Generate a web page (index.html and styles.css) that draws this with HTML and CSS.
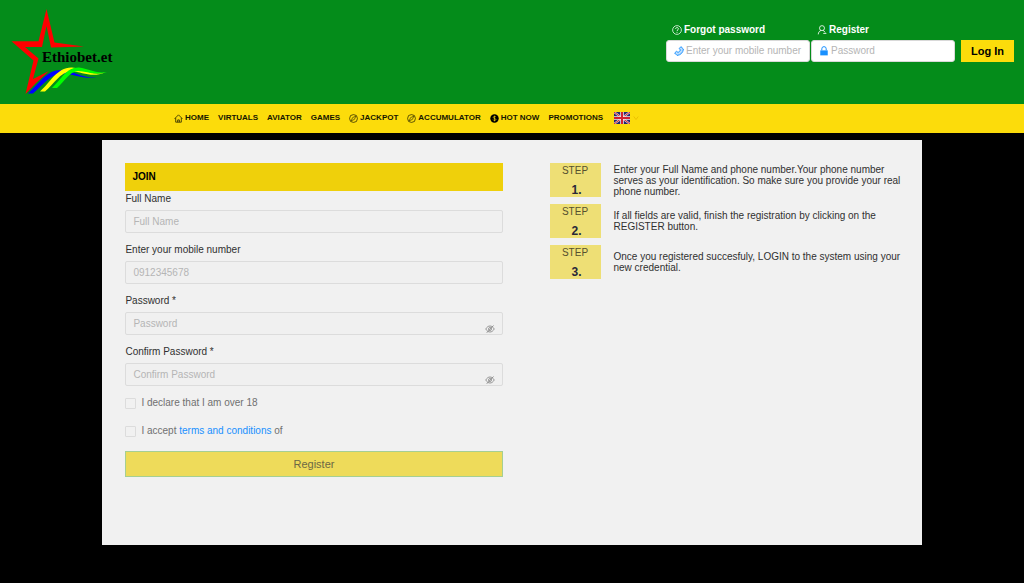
FILE: index.html
```html
<!DOCTYPE html>
<html lang="en">
<head>
<meta charset="utf-8">
<meta name="viewport" content="width=device-width, initial-scale=1">
<title>Ethiobet.et</title>
<link rel="stylesheet" href="styles.css">
</head>
<body>
<svg class="defs" aria-hidden="true">
  <symbol id="compass" viewBox="0 0 16 16"><circle cx="8" cy="8" r="7" fill="none" stroke="currentColor" stroke-width="1.2"/><path d="M12.200 3.800 9.600 9.600 3.800 12.200 6.400 6.400Z" fill="none" stroke="currentColor" stroke-width="1"/></symbol>
  <symbol id="eye-off" viewBox="0 0 20 20"><path d="M1.5 10C4 5.8 6.8 4 10 4s6 1.800 8.500 6C16 14.200 13.200 16 10 16s-6-1.800-8.500-6Z" fill="none" stroke="currentColor" stroke-width="1.700"/><circle cx="10" cy="10" r="3" fill="none" stroke="currentColor" stroke-width="1.600"/><path d="M3.500 17.500 17 3" stroke="currentColor" stroke-width="1.800"/></symbol>
</svg>
<header class="header">
  <a class="logo" href="#" aria-label="Ethiobet.et">
    <svg viewBox="0 0 130 104" width="130" height="104">
      <path fill="#f00" d="M46.500 9 54.500 42.500 84 46.500 51 47.500 46.500 26 42 47H25L38.500 58.500 33 79 49 71 36 83 25.500 94 33.500 60.500 11.500 41.200H38.500Z"/>
      <path fill="#00f" d="M28 93.500C40 82 48 69 62 70c11 1 19 8 35 7.500-16 2-26-5-36-4C51 74 43 85 33 93.500Z"/>
      <path fill="#ff0" d="M40 91.500C50 83 57 67 72 67.500c12 1 18 8.500 33 5-14 6-24-1.500-34-1C60 72 54 84 45 91.500Z"/>
      <path fill="#0f0" d="M52 88C62 79 66 67 79 67.500c10 1 16 6.500 28 4.500-13 4-20-1-29-1C69 72 65 81 57 88Z"/>
      <text class="logo-text" x="42" y="62">Ethiobet.et</text>
    </svg>
  </a>
  <form class="login">
    <div class="login-col">
      <a class="login-link" href="#"><svg class="icon" viewBox="0 0 16 16"><circle cx="8" cy="8" r="7" fill="none" stroke="currentColor" stroke-width="1.200"/><path d="M5.800 6.300C5.800 3.200 10.300 3.300 10.200 6.200 10.200 7.900 8 7.800 8 9.700M8 11v1.500" fill="none" stroke="currentColor" stroke-width="1.300"/></svg>Forgot password</a>
      <label class="login-field"><svg class="icon" viewBox="0 0 16 16"><path d="m11 1 4 3.800C14.700 10.500 10.500 14.700 4.800 15L1 11.200 4 8.500 6.500 10.300C8.200 9.500 9.500 8.200 10.300 6.500L8.500 4Z" fill="#1890ff" fill-opacity=".3" stroke="#1890ff" stroke-width="1.500"/></svg><input type="tel" aria-label="Mobile number" placeholder="Enter your mobile number"></label>
    </div>
    <div class="login-col">
      <a class="login-link" href="#"><svg class="icon" viewBox="0 0 16 16"><circle cx="8" cy="5" r="4" fill="none" stroke="currentColor" stroke-width="1.300"/><path d="M2 15c.2-3.500 2-5.500 4.500-6.300M9.500 8.700c1.700.5 2.800 1.600 3.500 3.300M10 13.500h5" fill="none" stroke="currentColor" stroke-width="1.300"/></svg>Register</a>
      <label class="login-field"><svg class="icon" viewBox="0 0 16 16"><path d="M4.500 7V4.500a3.500 3.500 0 0 1 7 0V7" fill="none" stroke="#1890ff" stroke-width="1.600"/><path d="M2 7h12v8H2Z" fill="#1890ff"/></svg><input type="password" aria-label="Login password" placeholder="Password"></label>
    </div>
    <button class="login-button" type="button">Log In</button>
  </form>
</header>
<nav class="nav">
  <a href="#"><svg class="nav-icon" viewBox="0 0 16 16"><path d="M1 8.500 8 1.500 15 8.500M3 7v7.500h10V7M6.500 14.500v-4h3v4" fill="none" stroke="currentColor" stroke-width="1.300"/></svg>HOME</a>
  <a href="#">VIRTUALS</a>
  <a href="#">AVIATOR</a>
  <a href="#">GAMES</a>
  <a href="#"><svg class="nav-icon"><use href="#compass"/></svg>JACKPOT</a>
  <a href="#"><svg class="nav-icon"><use href="#compass"/></svg>ACCUMULATOR</a>
  <a href="#"><svg class="nav-icon" viewBox="0 0 16 16"><circle cx="8" cy="8" r="7.500"/><path d="M10.500 5.500C10 3.800 5.700 3.900 5.700 6.100c0 2.400 4.800 1.300 4.800 3.700 0 2.300-4.500 2.300-5 .2M8 3v10" fill="none" stroke="#fcdc0b" stroke-width="1.200"/></svg>HOT NOW</a>
  <a href="#">PROMOTIONS</a>
  <button class="language" type="button" aria-label="Language: English">
    <svg viewBox="0 0 32 24" width="16" height="12"><path fill="#23276f" d="M0 0h32v24H0z"/><path d="m0 0 32 24M32 0 0 24" stroke="#ddd" stroke-width="4"/><path d="m0 0 32 24M32 0 0 24" stroke="#d2202f" stroke-width="2"/><path d="M16 0v24M0 12h32" stroke="#eee" stroke-width="7"/><path d="M16 0v24M0 12h32" stroke="#d2202f" stroke-width="4"/></svg>
    <svg viewBox="0 0 8 8" width="6" height="6"><path d="m1 2 3 4 3-4" fill="none" stroke="#e8b800"/></svg>
  </button>
</nav>
<main class="panel">
  <form class="join">
    <h1 class="join-title">JOIN</h1>
    <div class="field"><label for="name">Full Name</label><input id="name" type="text" placeholder="Full Name"></div>
    <div class="field"><label for="mobile">Enter your mobile number</label><input id="mobile" type="tel" placeholder="0912345678"></div>
    <div class="field"><label for="password">Password *</label><div class="secret"><input id="password" type="password" placeholder="Password"><button class="reveal" type="button" aria-label="Show password"><svg width="10" height="10"><use href="#eye-off"/></svg></button></div></div>
    <div class="field"><label for="confirm">Confirm Password *</label><div class="secret"><input id="confirm" type="password" placeholder="Confirm Password"><button class="reveal" type="button" aria-label="Show confirmed password"><svg width="10" height="10"><use href="#eye-off"/></svg></button></div></div>
    <div class="check"><input id="age" type="checkbox"><label for="age">I declare that I am over 18</label></div>
    <div class="check"><input id="terms" type="checkbox"><label for="terms">I accept <a href="#">terms and conditions</a> of</label></div>
    <button class="register" type="button">Register</button>
  </form>
  <ol class="steps">
    <li><div class="step">STEP<strong>1.</strong></div><p>Enter your Full Name and phone number.Your phone number serves as your identification. So make sure you provide your real phone number.</p></li>
    <li><div class="step">STEP<strong>2.</strong></div><p>If all fields are valid, finish the registration by clicking on the REGISTER button.</p></li>
    <li><div class="step">STEP<strong>3.</strong></div><p>Once you registered succesfuly, LOGIN to the system using your new credential.</p></li>
  </ol>
</main>
</body>
</html>
```

FILE: styles.css
```css
* { box-sizing: border-box; }
body {
  margin: 0;
  background: #000;
  color: #303030;
  font: 10px/16px "Liberation Sans", Arial, sans-serif;
}
input, button { font: inherit; color: inherit; margin: 0; }
input::placeholder { color: #b5b5b5; opacity: 1; }
a { text-decoration: none; }
svg { display: block; flex: none; }
.defs { position: absolute; width: 0; height: 0; }

.header {
  display: flex;
  justify-content: space-between;
  align-items: flex-start;
  background: #048c1a;
}
.logo-text { font: bold 15px "Liberation Serif", serif; fill: #000; }
.login {
  display: flex;
  align-items: flex-end;
  gap: 1px;
  padding: 22px 10px 0 0;
}
.login-col { width: 144px; }
.login-link {
  display: flex;
  align-items: center;
  gap: 2px;
  padding-left: 6px;
  margin-bottom: 2px;
  color: #fff;
  font-weight: bold;
}
.icon { width: 10px; height: 10px; }
.login-field {
  display: flex;
  align-items: center;
  gap: 2px;
  height: 22px;
  padding: 0 4px 0 7px;
  border: 1px solid #d9d9d9;
  border-radius: 3px;
  background: #fff;
}
.login-field input {
  flex: 1;
  min-width: 0;
  padding: 0;
  border: 0;
  outline: 0;
  background: none;
  color: #262626;
}
.login-button {
  height: 22px;
  margin-left: 5px;
  padding: 0 10px;
  border: 0;
  background: #fcdc0b;
  color: #000;
  font-size: 11px;
  font-weight: bold;
}

.nav {
  display: flex;
  align-items: center;
  gap: 9px;
  min-height: 29px;
  padding: 0 17% 1px;
  background: #fcdc0b;
  font-size: 8px;
  font-weight: bold;
  white-space: nowrap;
}
.nav a { display: flex; align-items: center; gap: 2px; color: #161600; }
.nav-icon { width: 9px; height: 9px; }
.language {
  display: flex;
  align-items: center;
  gap: 3px;
  padding: 0 2px;
  border: 0;
  background: none;
}

.panel {
  display: grid;
  grid-template-columns: 377fr 360fr;
  align-items: start;
  gap: 47px;
  width: 80%;
  min-height: 405px;
  margin: 7px auto 38px;
  padding: 23px 12px 23px 23px;
  border: 0 solid #9a9a9a;
  background: #f1f1f1;
}
.join-title {
  margin: 0;
  padding: 6px 7px;
  background: #efd00b;
  color: #000;
  font-size: 10px;
  line-height: 16px;
}
.field { margin-bottom: 9px; }
.field label { display: block; line-height: 15px; margin-bottom: 4px; }
.field input {
  display: block;
  width: 100%;
  height: 23px;
  padding: 0 7px;
  border: 1px solid #dcdcdc;
  border-radius: 2px;
  background: #f0f0f0;
}
.secret { position: relative; }
.reveal {
  position: absolute;
  right: 8px;
  bottom: 1px;
  padding: 0;
  border: 0;
  background: none;
  color: #858585;
}
.check {
  display: flex;
  align-items: center;
  gap: 5px;
  margin-bottom: 12px;
  color: #707070;
}
.check input {
  appearance: none;
  width: 11px;
  height: 11px;
  border: 1px solid #dcdcdc;
  border-radius: 1px;
}
.check a { color: #1890ff; }
.register {
  display: block;
  width: 100%;
  height: 26px;
  border: 1px solid #a5cf92;
  background: #eedb5a;
  color: #6b6745;
  font-size: 11px;
}

.steps {
  display: grid;
  gap: 7px;
  margin: 0;
  padding: 0;
  list-style: none;
}
.steps li { display: flex; align-items: center; gap: 13px; }
.step {
  flex: none;
  width: 51px;
  height: 34px;
  background: #eedf75;
  color: #55502f;
  line-height: 15px;
  text-align: center;
}
.step strong {
  display: block;
  padding-left: 3px;
  color: #28283a;
  font-size: 12px;
  line-height: 24px;
}
.steps p { max-width: 292px; margin: 0; line-height: 11px; }
```
